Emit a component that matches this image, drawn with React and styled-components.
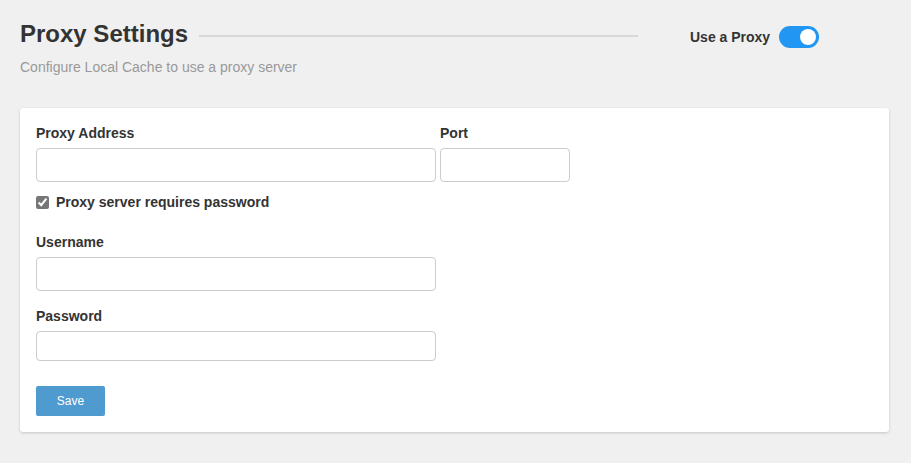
import React, { useState } from 'react';
import styled, { createGlobalStyle } from 'styled-components';

const GlobalStyle = createGlobalStyle`
  html, body {
    margin: 0;
    padding: 0;
    background: #f0f0f0;
    font-family: "Liberation Sans", Arial, sans-serif;
    color: #333;
  }
  * { box-sizing: border-box; }
`;

const Page = styled.div`
  width: 911px;
  height: 463px;
  padding: 20px 22px 0 20px;
`;

const Header = styled.div`
  display: flex;
  align-items: flex-start;
`;

const HeaderMain = styled.div`
  width: 618px;
`;

const TitleRow = styled.div`
  display: flex;
  align-items: center;
  height: 28px;
`;

const Title = styled.h1`
  margin: 0;
  font-size: 24px;
  font-weight: bold;
  color: #333;
  white-space: nowrap;
`;

const TitleLine = styled.div`
  flex: 1;
  height: 2px;
  margin-left: 11px;
  margin-top: 3px;
  background: #d8d8d8;
`;

const Subtitle = styled.p`
  margin: 11px 0 0;
  font-size: 14px;
  color: #999;
`;

const ToggleWrap = styled.label`
  display: flex;
  align-items: center;
  gap: 9px;
  margin-left: 52px;
  margin-top: 6px;
  font-size: 14px;
  font-weight: bold;
  color: #333;
  cursor: pointer;
`;

const Switch = styled.span`
  position: relative;
  width: 40px;
  height: 22px;
  border-radius: 11px;
  background: ${(p) => (p.$on ? '#2196f3' : '#ccc')};
  &::after {
    content: '';
    position: absolute;
    top: 3px;
    left: ${(p) => (p.$on ? '21px' : '3px')};
    width: 16px;
    height: 16px;
    border-radius: 50%;
    background: #fff;
  }
`;

const Card = styled.div`
  margin-top: 33px;
  width: 869px;
  background: #fff;
  border-radius: 3px;
  box-shadow: 0 1px 3px rgba(0, 0, 0, 0.18);
  padding: 15px 16px 16px;
`;

const Row = styled.div`
  display: flex;
  gap: 4px;
`;

const Field = styled.div`
  display: flex;
  flex-direction: column;
  margin-top: ${(p) => p.$mt || 0}px;
`;

const Label = styled.label`
  font-size: 14px;
  font-weight: bold;
  line-height: 20px;
  margin-bottom: 5px;
  color: #333;
`;

const Input = styled.input`
  width: ${(p) => p.$w}px;
  height: ${(p) => p.$h || 34}px;
  border: 1px solid #ccc;
  border-radius: 4px;
  background: #fff;
  padding: 6px 10px;
  font-size: 14px;
  font-family: inherit;
  outline: none;
`;

const CheckRow = styled.label`
  display: flex;
  align-items: center;
  gap: 7px;
  margin-top: 10px;
  height: 20px;
  font-size: 14px;
  font-weight: bold;
  color: #333;
`;

const Check = styled.input`
  margin: 0;
  width: 13px;
  height: 13px;
  accent-color: #767676;
`;

const SaveButton = styled.button`
  margin-top: 25px;
  width: 69px;
  height: 30px;
  border: none;
  border-radius: 2px;
  background: #4f9bd0;
  color: #fff;
  font-size: 12px;
  font-family: inherit;
  cursor: pointer;
`;

export default function App() {
  const [useProxy, setUseProxy] = useState(true);
  const [needsPass, setNeedsPass] = useState(true);

  return (
    <Page>
      <GlobalStyle />
      <Header>
        <HeaderMain>
          <TitleRow>
            <Title>Proxy Settings</Title>
            <TitleLine />
          </TitleRow>
          <Subtitle>Configure Local Cache to use a proxy server</Subtitle>
        </HeaderMain>
        <ToggleWrap onClick={() => setUseProxy(!useProxy)}>
          Use a Proxy
          <Switch $on={useProxy} />
        </ToggleWrap>
      </Header>
      <Card>
        <Row>
          <Field>
            <Label>Proxy Address</Label>
            <Input $w={400} />
          </Field>
          <Field>
            <Label>Port</Label>
            <Input $w={130} />
          </Field>
        </Row>
        <CheckRow>
          <Check
            type="checkbox"
            checked={needsPass}
            onChange={() => setNeedsPass(!needsPass)}
          />
          Proxy server requires password
        </CheckRow>
        <Field $mt={20}>
          <Label>Username</Label>
          <Input $w={400} />
        </Field>
        <Field $mt={15}>
          <Label>Password</Label>
          <Input $w={400} $h={30} />
        </Field>
        <SaveButton>Save</SaveButton>
      </Card>
    </Page>
  );
}
